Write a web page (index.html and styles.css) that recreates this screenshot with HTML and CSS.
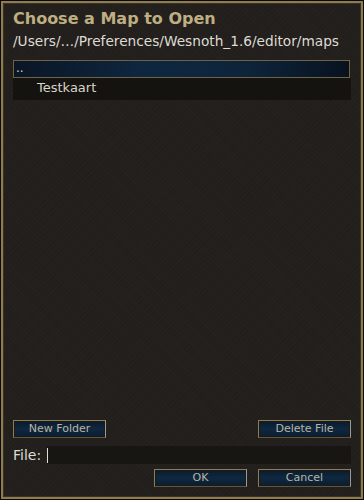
FILE: index.html
```html
<!DOCTYPE html>
<html>
<head>
<meta charset="utf-8">
<link rel="stylesheet" href="styles.css">
</head>
<body>
<div class="window">
  <div class="title">Choose a Map to Open</div>
  <div class="path">/Users/…/Preferences/Wesnoth_1.6/editor/maps</div>
  <div class="list">
    <div class="row selected">..</div>
    <div class="row file">Testkaart</div>
  </div>
  <div class="spacer"></div>
  <div class="btnrow">
    <div class="btn">New Folder</div>
    <div class="btn">Delete File</div>
  </div>
  <div class="filerow">
    <span class="filelabel">File:</span>
    <div class="input"><span class="caret"></span></div>
  </div>
  <div class="okrow">
    <div class="btn">OK</div>
    <div class="btn">Cancel</div>
  </div>
</div>
</body>
</html>
```
FILE: styles.css
```css
html, body {
  margin: 0;
  padding: 0;
  background: #0e0d0b;
}
.window {
  box-sizing: border-box;
  width: 364px;
  height: 500px;
  border: 1px solid #0b0a08;
  box-shadow: inset 0 0 0 2px #8c7c50, inset 0 0 0 3px #3a3222;
  background-color: #221f1c;
  background-image:
    repeating-linear-gradient(45deg, rgba(255,255,255,0.012) 0 1px, transparent 1px 3px),
    repeating-linear-gradient(-45deg, rgba(0,0,0,0.05) 0 1px, transparent 1px 4px);
  display: flex;
  flex-direction: column;
  padding: 0 12px 0 12px;
  font-family: "DejaVu Sans", sans-serif;
}
.title {
  margin-top: 8px;
  font-weight: bold;
  font-size: 16px;
  line-height: 20px;
  color: #bfae82;
}
.path {
  margin-top: 3px;
  font-size: 13.7px;
  line-height: 18px;
  color: #dedbd3;
}
.list {
  margin-top: 10px;
  width: 338px;
}
.row {
  font-size: 13px;
  color: #d8d4ca;
  box-sizing: border-box;
}
.selected {
  width: 337px;
  height: 18px;
  border: 1px solid #6e6444;
  background: linear-gradient(90deg, #0a1626 0%, #0e2740 40%, #0d243b 70%, #08121f 100%);
  padding-left: 2px;
  line-height: 14px;
  color: #d8d4ca;
  font-size: 12px;
}
.file {
  height: 22px;
  background: #151310;
  padding-left: 24px;
  line-height: 20px;
}
.spacer {
  flex: 1;
}
.btnrow, .okrow {
  display: flex;
  justify-content: space-between;
}
.okrow {
  justify-content: flex-end;
  gap: 11px;
  margin-top: 5px;
  margin-bottom: 12px;
}
.btn {
  box-sizing: border-box;
  width: 93px;
  height: 18px;
  border: 1px solid #8a7e58;
  border-right-color: #9a9a9a;
  border-bottom-color: #5e5640;
  box-shadow: inset 0 0 0 1px #1c1a14;
  background: linear-gradient(180deg, #0b1a2c 0%, #0f2840 50%, #0b1c30 100%);
  color: #b8b4a2;
  font-size: 11px;
  line-height: 16px;
  text-align: center;
}
.filerow {
  display: flex;
  align-items: center;
  margin-top: 8px;
  height: 18px;
}
.filelabel {
  font-size: 14px;
  color: #dedbd3;
  width: 34px;
}
.input {
  flex: 1;
  height: 18px;
  background: #181613;
  display: flex;
  align-items: center;
}
.caret {
  width: 1px;
  height: 15px;
  background: #e0ddd5;
}
```
